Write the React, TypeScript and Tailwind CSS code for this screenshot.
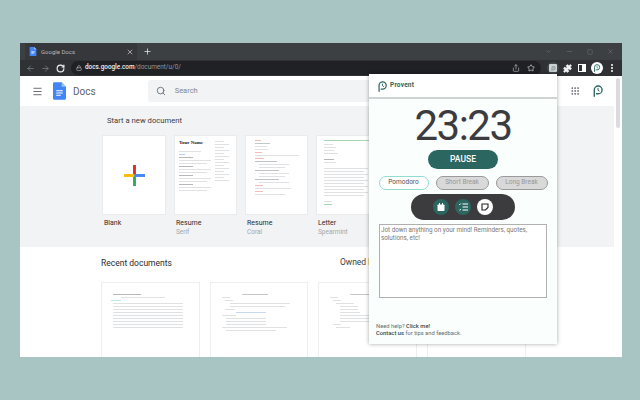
import React from "react";
import { ArrowLeft, ArrowRight, RotateCw, Lock, X, Plus, Minus, Square, ChevronDown, Share, Star, Puzzle, Search, Menu, Grip } from "lucide-react";

const Logo = ({ c = "#2b6660", s = 14 }: { c?: string; s?: number }) => (
  <svg width={s} height={s} viewBox="0 0 16 16" fill="none" stroke={c} strokeWidth="1.8" strokeLinecap="round">
    <path d="M3 15V6.5a5.2 5.2 0 1 1 5.2 5.2H6" />
    <path d="M8 4.5V7l1.6 1" strokeWidth="1.3" />
  </svg>
);

const DocIcon = ({ w, h }: { w: number; h: number }) => (
  <svg width={w} height={h} viewBox="0 0 12 16">
    <path d="M1 0h7l4 4v11a1 1 0 0 1-1 1H1a1 1 0 0 1-1-1V1a1 1 0 0 1 1-1z" fill="#4285f4" />
    <path d="M8 0l4 4H8z" fill="#a1c2fa" />
    <path d="M3 7.4h6v.9H3zM3 9.4h6v.9H3zM3 11.4h4.2v.9H3z" fill="#fff" />
  </svg>
);

type L = [number, number, string?];
const Lines = ({ lines, h = "h-px" }: { lines: L[]; h?: string }) => (
  <div className="flex flex-col gap-[2px]">
    {lines.map((l, i) => (
      <div key={i} className={h} style={{ width: l[0], marginLeft: l[1], background: l[2] ?? "#dfe1e3" }} />
    ))}
  </div>
);

const Thumb = ({ children, title, sub, w = "w-[63px]" }: { children?: React.ReactNode; title: string; sub?: string; w?: string }) => (
  <div className={`${w} shrink-0`}>
    <div className="h-[80px] bg-white border border-[#e9ebed] overflow-hidden">{children}</div>
    <div className="mt-[4px] text-[7px] leading-[9px] text-[#2a2b2e] pl-[2px]">{title}</div>
    {sub && <div className="text-[6.5px] leading-[9px] text-[#a4a6aa] pl-[2px]">{sub}</div>}
  </div>
);

const rep = (n: number, a: L[]): L[] => Array.from({ length: n }).flatMap(() => a);

const Recent = ({ lines, w }: { lines: L[]; w: string }) => (
  <div className={`${w} h-[80px] shrink-0 border border-[#eceef0] bg-white pt-[11px] px-[9px] overflow-hidden`}>
    <Lines lines={lines} h="h-[1px]" />
  </div>
);

export default function App() {
  return (
    <div className="relative w-[640px] h-[400px] overflow-hidden bg-[#a9c5c3] pt-[43px] pl-[20px] opacity-[0.999] font-['Roboto',sans-serif]">
      <div className="w-[602px] h-[314px] flex flex-col overflow-hidden bg-white">
        {/* tab strip */}
        <div className="h-[17px] shrink-0 flex items-center bg-[#3c4043]">
          <div className="ml-[5px] w-[112px] h-full bg-[#35373a] flex items-center pl-[4px] pr-[3px] gap-[4px]">
            <DocIcon w={8} h={9} />
            <span className="flex-1 text-[6px] text-[#b5b8bb]">Google Docs</span>
            <X size={8} color="#d8dadc" />
          </div>
          <Plus size={9} color="#e8eaed" className="ml-[6px]" />
          <div className="ml-auto mr-[8px] flex items-center gap-[14px]">
            <ChevronDown size={7} color="#6f7377" />
            <Minus size={7} color="#6f7377" />
            <Square size={6} color="#6f7377" />
            <X size={7} color="#6f7377" />
          </div>
        </div>
        {/* toolbar */}
        <div className="h-[16px] shrink-0 flex items-center bg-[#2f3134] pl-[6px] pr-[9px]">
          <ArrowLeft size={9} color="#7f8387" />
          <ArrowRight size={9} color="#7f8387" className="ml-[6px]" />
          <RotateCw size={9} color="#f1f3f4" strokeWidth={3} className="ml-[6px]" />
          <div className="ml-[6px] flex-1 h-[14px] rounded-full bg-[#202124] flex items-center pl-[5px] pr-[6px]">
            <Lock size={6} color="#d0d2d4" />
            <span className="ml-[3px] text-[6.4px] text-[#f1f3f4] font-medium">docs.google.com<span className="text-[#94979b] font-normal">/document/u/0/</span></span>
            <Share size={8} color="#b5b8bb" className="ml-auto" />
            <Star size={8} color="#d8dadc" className="ml-[7px]" />
          </div>
          <div className="ml-[6px] w-[12px] h-[12px] rounded-full bg-[#44474b] flex items-center justify-center">
            <div className="w-[8px] h-[8px] rounded-[1px] bg-[#c9d3d2] flex items-center justify-center"><Logo c="#64706f" s={5} /></div>
          </div>
          <Puzzle size={9} color="#f1f3f4" fill="#f1f3f4" className="ml-[4px]" />
          <div className="ml-[6px] w-[8px] h-[8px] border-[1.5px] border-white flex justify-end"><div className="w-[3px] bg-white" /></div>
          <div className="ml-[5px] w-[12px] h-[12px] rounded-full bg-white flex items-center justify-center"><Logo s={8} /></div>
          <div className="ml-[8px] w-[2px] h-[8px] flex flex-col justify-between">
            <i className="block w-[2px] h-[2px] bg-white rounded-full" /><i className="block w-[2px] h-[2px] bg-white rounded-full" /><i className="block w-[2px] h-[2px] bg-white rounded-full" />
          </div>
        </div>
        <div className="flex-1 flex min-h-0">
          <div className="flex-1 min-w-0 flex flex-col">
            {/* header */}
            <div className="h-[30px] shrink-0 flex items-center pl-[12px]">
              <Menu size={11} color="#5f6368" />
              <div className="ml-[10px]"><DocIcon w={13} h={18} /></div>
              <span className="ml-[7px] mt-[1px] text-[10px] text-[#5f6368]">Docs</span>
              <div className="ml-[52px] w-[405px] h-[22px] rounded-[3px] bg-[#f1f3f4] flex items-center pl-[8px]">
                <Search size={10} color="#5f6368" />
                <span className="ml-[9px] text-[7.5px] text-[#85888c]">Search</span>
              </div>
              <Grip size={10} color="#5f6368" className="ml-[17px]" />
              <div className="ml-[12px]"><Logo s={12} /></div>
            </div>
            {/* templates */}
            <div className="h-[141px] shrink-0 bg-[#f1f3f4] pl-[82px] overflow-hidden">
              <div className="pt-[10px] text-[7.7px] leading-[10px] text-[#3c4043] ml-[5px]">Start a new document</div>
              <div className="mt-[9px] flex gap-[8px]">
                <Thumb title="Blank" w="w-[64px]">
                  <div className="h-full flex items-center justify-center">
                    <svg width="21" height="21" viewBox="0 0 22 22">
                      <rect x="9.5" y="0" width="3" height="11" fill="#d93025" />
                      <rect x="9.5" y="11" width="3" height="11" fill="#34a853" />
                      <rect x="0" y="9.5" width="11" height="3" fill="#fbbc04" />
                      <rect x="11" y="9.5" width="11" height="3" fill="#4285f4" />
                    </svg>
                  </div>
                </Thumb>
                <Thumb title="Resume" sub="Serif">
                  <div className="flex gap-[2px] pl-[4px] pt-[4px]">
                    <div className="w-[34px]">
                      <div className="text-[5px] leading-[6px] font-bold text-[#222] font-['Liberation_Serif',serif] whitespace-nowrap">Your Name</div>
                      <div className="mt-[5px]"><Lines lines={[[22, 0], [6, 0, "#b7cdf3"], ...rep(4, [[14, 0, "#b5b7ba"], [32, 0], [28, 0]] as L[])]} /></div>
                    </div>
                    <div className="w-[16px] pt-[1px]"><Lines lines={rep(7, [[9, 0], [14, 0]] as L[])} /></div>
                  </div>
                </Thumb>
                <Thumb title="Resume" sub="Coral">
                  <div className="pl-[9px] pt-[4px]">
                    <Lines lines={[[6, 0, "#f0bdb7"], [15, 0, "#c4c6c9"], [12, 0], [13, 0], [7, 0, "#f0bdb7"], [44, 0], [9, 0, "#f0bdb7"], [22, 0, "#c0c2c5"], [30, 4], [26, 4], [24, 0, "#c0c2c5"], [30, 4], [26, 4], [24, 0, "#c0c2c5"], [30, 4], [8, 0, "#f0bdb7"], [36, 0], [8, 0, "#f0bdb7"], [30, 0]]} />
                  </div>
                </Thumb>
                <Thumb title="Letter" sub="Spearmint" w="w-[63px]">
                  <div className="pl-[7px] pr-[4px] pt-[4px]">
                    <div className="h-[1px] w-full bg-[#a9d7b4] mb-[3px]" />
                    <Lines lines={[[9, 0], [12, 0], [10, 0], [14, 0], [4, 0, "#fff"], [10, 0, "#b5b7ba"], [12, 0], [4, 0, "#fff"], ...rep(5, [[44, 0], [40, 0]] as L[]), [4, 0, "#fff"], [8, 0], [8, 0, "#9ed5ad"]]} />
                  </div>
                </Thumb>
              </div>
            </div>
            {/* recent */}
            <div className="flex-1 pl-[81px] overflow-hidden">
              <div className="flex items-start h-[35px]">
                <span className="mt-[11px] text-[8.5px] leading-[11px] text-[#2a2b2e]">Recent documents</span>
                <span className="ml-[168px] mt-[10px] text-[8.5px] leading-[11px] text-[#3c4043]">Owned by anyone</span>
              </div>
              <div className="flex gap-[10px]">
                <Recent w="w-[99px]" lines={[[28, 2, "#b5b7ba"], [44, 10], [10, 0, "#bde9ea"], [70, 2], [70, 2], [70, 2], ...rep(6, [[70, 2]] as L[])]} />
                <Recent w="w-[98px]" lines={[[26, 22, "#c4c6c9"], [8, 2], [8, 5], [60, 10], [55, 10], [10, 5], [30, 16, "#c8d8f3"], [14, 2], [40, 6], [40, 6], [40, 6], [65, 2], [50, 6]]} />
                <Recent w="w-[99px]" lines={[[26, 22, "#c4c6c9"], [8, 2], [8, 5], [18, 8], [18, 12], [18, 12], [20, 12], [30, 12], [30, 12], [30, 12], [8, 5], [14, 8]]} />
                <Recent w="w-[99px]" lines={[[26, 22, "#c4c6c9"], [40, 6], [40, 6]]} />
              </div>
            </div>
          </div>
          {/* scrollbar */}
          <div className="w-[8px] shrink-0 bg-white pt-[2px] pl-[2px]">
            <div className="w-[4px] h-[50px] rounded-full bg-[#dadce0]" />
          </div>
        </div>
      </div>

      {/* extension popup */}
      <div className="absolute left-[369px] top-[74px] w-[188px] h-[270px] flex flex-col bg-[#fafefd] shadow-[0_0_4px_rgba(0,0,0,0.35)]">
        <div className="h-[25px] shrink-0 bg-white border-b-2 border-[#cfd3d3] flex items-center pl-[8px] pt-[1px]">
          <Logo s={11} />
          <span className="ml-[2px] text-[6.5px] font-bold tracking-[0.2px] text-[#2b6660]">Provent</span>
        </div>
        <div className="flex flex-col items-center">
          <div className="mt-[2px] text-[42px] leading-[50px] tracking-[-1.5px] text-[#3c3c3e]">23:23</div>
          <div className="mt-[-1px] w-[70px] h-[19px] rounded-full bg-[#2b6660] flex items-center justify-center text-[8.5px] font-medium text-white">PAUSE</div>
          <div className="mt-[7px] flex gap-[7px] items-center">
            <div className="w-[50px] h-[14px] rounded-full border border-[#8fdcd3] bg-white flex items-center justify-center text-[6.5px] text-[#555]">Pomodoro</div>
            <div className="w-[53px] h-[14px] rounded-full border border-[#9a9a9a] bg-[#d9d9d9] flex items-center justify-center text-[6.5px] text-[#979797]">Short Break</div>
            <div className="w-[52px] h-[14px] rounded-full border border-[#9a9a9a] bg-[#d9d9d9] flex items-center justify-center text-[6.5px] text-[#979797]">Long Break</div>
          </div>
          <div className="mt-[4px] w-[104px] h-[26px] rounded-[13px] bg-[#3c3c3e] flex items-center justify-center gap-[6px]">
            <div className="w-[16px] h-[16px] rounded-full bg-[#2b6660] flex items-center justify-center">
              <svg width="8" height="8" viewBox="0 0 8 8" fill="#fff"><rect x="0.5" y="1.5" width="7" height="6.5" rx="0.7" /><rect x="2" y="0" width="1" height="2" /><rect x="5" y="0" width="1" height="2" /></svg>
            </div>
            <div className="w-[16px] h-[16px] rounded-full bg-[#2b6660] flex items-center justify-center">
              <svg width="9" height="8" viewBox="0 0 9 8" fill="none" stroke="#fff" strokeWidth="1"><path d="M3.5 1h5.5M3.5 4h5.5M3.5 7h5.5" /><path d="M0 1l.8.8L2 .4M0 6.5l.8.8L2 5.9" strokeWidth="0.8" /></svg>
            </div>
            <div className="w-[16px] h-[16px] rounded-full bg-white flex items-center justify-center">
              <svg width="8" height="8" viewBox="0 0 8 8" fill="none" stroke="#222" strokeWidth="1.1"><path d="M1 1h6v3.5L4.5 7H1z" /></svg>
            </div>
          </div>
          <div className="mt-[4px] w-[168px] h-[74px] border border-[#b0b0b0] bg-white px-[1px] pt-[1px] text-[6.3px] leading-[8px] text-[#777]">
            Jot down anything on your mind! Reminders, quotes, solutions, etc!
          </div>
        </div>
        <div className="mt-auto mb-[7px] pl-[7px] text-[5.8px] leading-[7px] text-[#5f6f6e]">
          <div>Need help? <span className="text-[#2f4a48] font-medium">Click me!</span></div>
          <div><span className="text-[#2f4a48] font-medium">Contact us</span> for tips and feedback.</div>
        </div>
      </div>
    </div>
  );
}
